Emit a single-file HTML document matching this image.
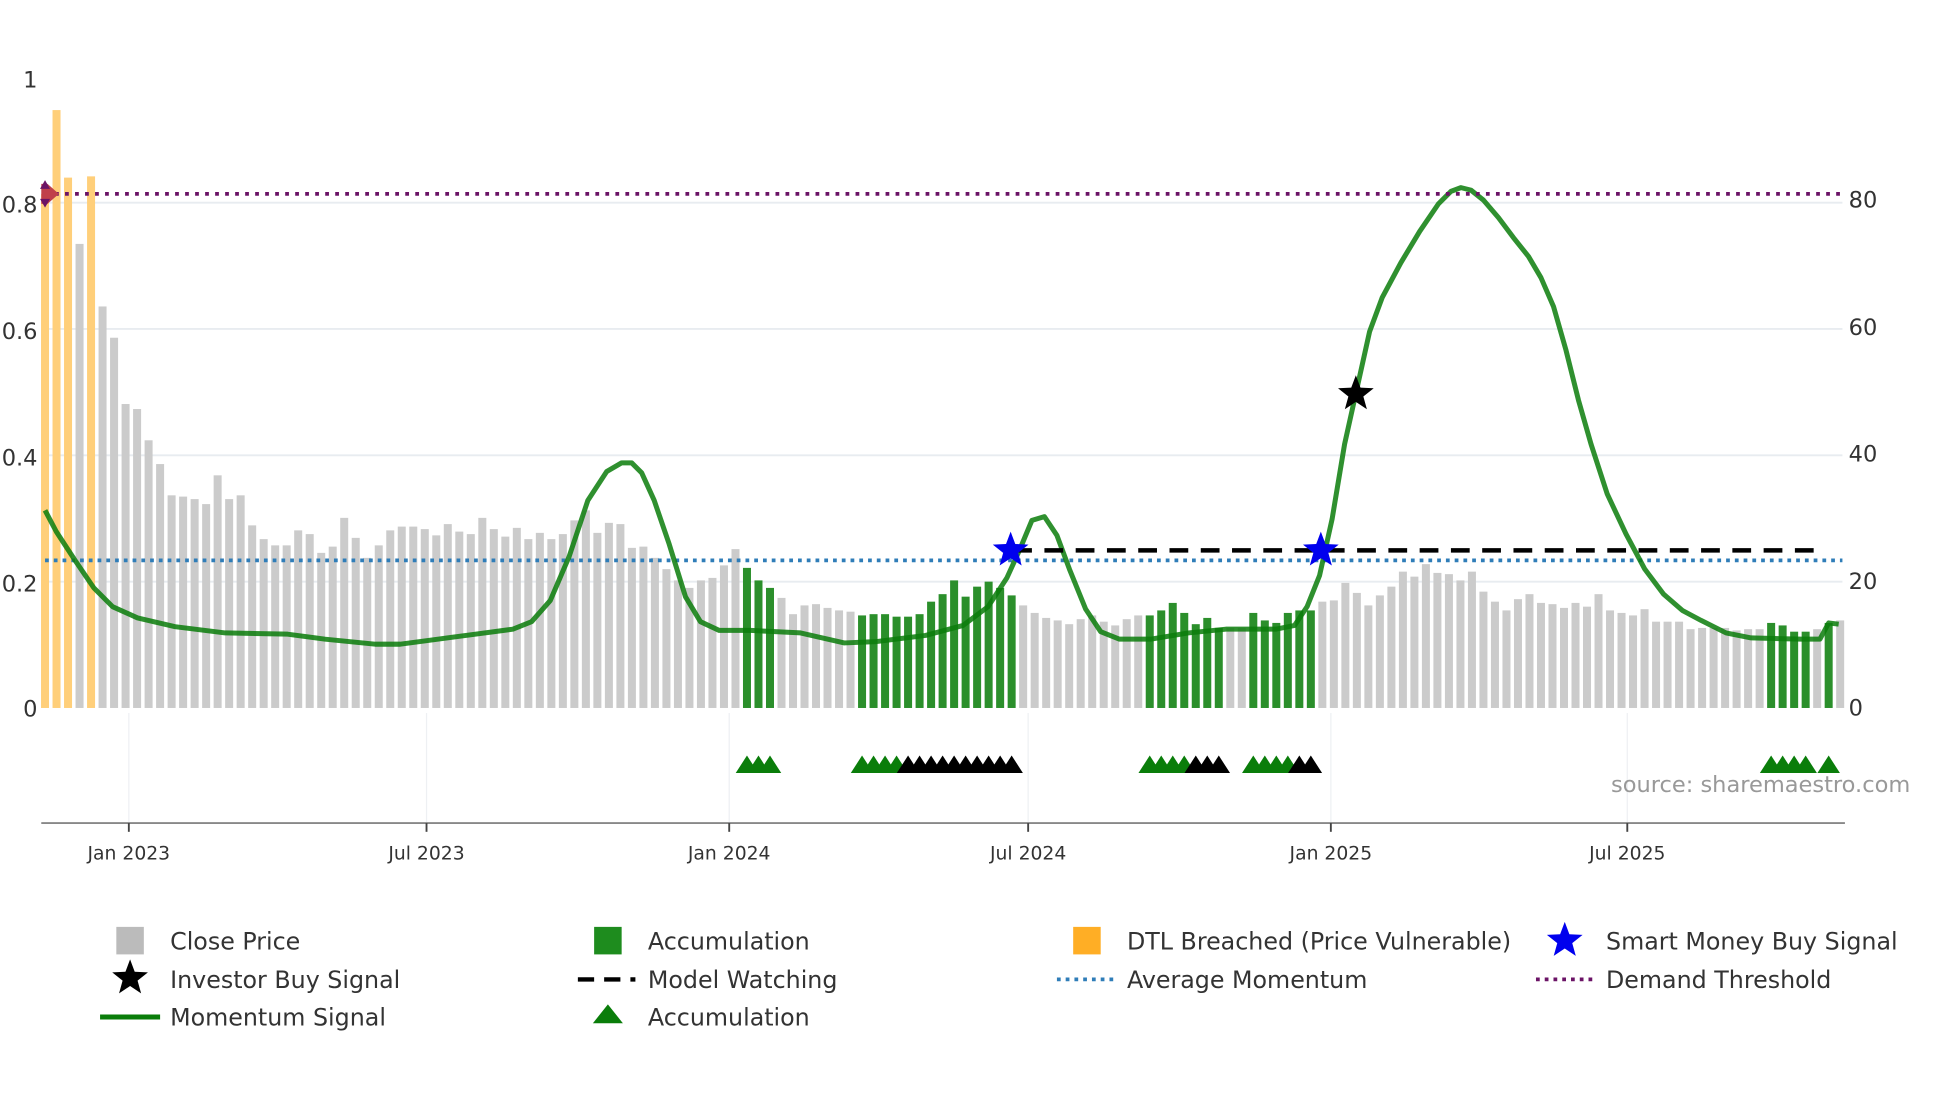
<!DOCTYPE html>
<html><head><meta charset="utf-8"><style>
html,body{margin:0;padding:0;background:#fff;width:1960px;height:1102px;overflow:hidden}
svg{display:block}
text{font-family:"DejaVu Sans","Liberation Sans",sans-serif;fill:#333}
</style></head><body>
<svg width="1960" height="1102" viewBox="0 0 1567 881" preserveAspectRatio="none" xmlns="http://www.w3.org/2000/svg">
<defs><path id="st" d="M0,-15 L3.7,-5.1 L14.27,-4.64 L5.99,1.95 L8.82,12.14 L0,6.3 L-8.82,12.14 L-5.99,1.95 L-14.27,-4.64 L-3.7,-5.1Z"/>
<path id="tr" d="M-9,618 L0,604 L9,618Z"/></defs>
<g stroke="#e8ecf0" stroke-width="1.5">
<line x1="33" y1="465" x2="1473" y2="465"/><line x1="33" y1="364" x2="1473" y2="364"/>
<line x1="33" y1="263" x2="1473" y2="263"/><line x1="33" y1="162" x2="1473" y2="162"/>
</g>
<g stroke="#eef0f3" stroke-width="1">
<line x1="103" y1="570" x2="103" y2="658"/><line x1="341" y1="570" x2="341" y2="658"/>
<line x1="583" y1="570" x2="583" y2="658"/><line x1="822" y1="570" x2="822" y2="658"/>
<line x1="1064" y1="570" x2="1064" y2="658"/><line x1="1301" y1="570" x2="1301" y2="658"/>
</g>
<g fill="#ffcf7a">
<rect x="32.8" y="155" width="6.4" height="411"/><rect x="42" y="88" width="6.4" height="478"/><rect x="51.2" y="142" width="6.4" height="424"/><rect x="69.6" y="141" width="6.4" height="425"/>
</g>
<g fill="#cbcbcb">
<rect x="60.4" y="195" width="6.4" height="371"/><rect x="78.8" y="245" width="6.4" height="321"/><rect x="88" y="270" width="6.4" height="296"/><rect x="97.2" y="323" width="6.4" height="243"/><rect x="106.4" y="327" width="6.4" height="239"/><rect x="115.6" y="352" width="6.4" height="214"/><rect x="124.8" y="371" width="6.4" height="195"/><rect x="134" y="396" width="6.4" height="170"/><rect x="143.2" y="397" width="6.4" height="169"/><rect x="152.4" y="399" width="6.4" height="167"/><rect x="161.6" y="403" width="6.4" height="163"/><rect x="170.8" y="380" width="6.4" height="186"/><rect x="180" y="399" width="6.4" height="167"/><rect x="189.2" y="396" width="6.4" height="170"/><rect x="198.4" y="420" width="6.4" height="146"/><rect x="207.6" y="431" width="6.4" height="135"/><rect x="216.8" y="436" width="6.4" height="130"/><rect x="226" y="436" width="6.4" height="130"/><rect x="235.2" y="424" width="6.4" height="142"/><rect x="244.4" y="427" width="6.4" height="139"/><rect x="253.6" y="442" width="6.4" height="124"/><rect x="262.8" y="437" width="6.4" height="129"/><rect x="272" y="414" width="6.4" height="152"/><rect x="281.2" y="430" width="6.4" height="136"/><rect x="290.4" y="446" width="6.4" height="120"/><rect x="299.6" y="436" width="6.4" height="130"/><rect x="308.8" y="424" width="6.4" height="142"/><rect x="318" y="421" width="6.4" height="145"/><rect x="327.2" y="421" width="6.4" height="145"/><rect x="336.4" y="423" width="6.4" height="143"/><rect x="345.6" y="428" width="6.4" height="138"/><rect x="354.8" y="419" width="6.4" height="147"/><rect x="364" y="425" width="6.4" height="141"/><rect x="373.2" y="427" width="6.4" height="139"/><rect x="382.4" y="414" width="6.4" height="152"/><rect x="391.6" y="423" width="6.4" height="143"/><rect x="400.8" y="429" width="6.4" height="137"/><rect x="410" y="422" width="6.4" height="144"/><rect x="419.2" y="431" width="6.4" height="135"/><rect x="428.4" y="426" width="6.4" height="140"/><rect x="437.6" y="431" width="6.4" height="135"/><rect x="446.8" y="427" width="6.4" height="139"/><rect x="456" y="416" width="6.4" height="150"/><rect x="465.2" y="408" width="6.4" height="158"/><rect x="474.4" y="426" width="6.4" height="140"/><rect x="483.6" y="418" width="6.4" height="148"/><rect x="492.8" y="419" width="6.4" height="147"/><rect x="502" y="438" width="6.4" height="128"/><rect x="511.2" y="437" width="6.4" height="129"/><rect x="520.4" y="446" width="6.4" height="120"/><rect x="529.6" y="455" width="6.4" height="111"/><rect x="538.8" y="464" width="6.4" height="102"/><rect x="548" y="470" width="6.4" height="96"/><rect x="557.2" y="464" width="6.4" height="102"/><rect x="566.4" y="462" width="6.4" height="104"/><rect x="575.6" y="452" width="6.4" height="114"/><rect x="584.8" y="439" width="6.4" height="127"/>
<rect x="621.6" y="478" width="6.4" height="88"/><rect x="630.8" y="491" width="6.4" height="75"/><rect x="640" y="484" width="6.4" height="82"/><rect x="649.2" y="483" width="6.4" height="83"/><rect x="658.4" y="486" width="6.4" height="80"/><rect x="667.6" y="488" width="6.4" height="78"/><rect x="676.8" y="489" width="6.4" height="77"/>
<rect x="814.8" y="484" width="6.4" height="82"/><rect x="824" y="490" width="6.4" height="76"/><rect x="833.2" y="494" width="6.4" height="72"/><rect x="842.4" y="496" width="6.4" height="70"/><rect x="851.6" y="499" width="6.4" height="67"/><rect x="860.8" y="495" width="6.4" height="71"/><rect x="870" y="492" width="6.4" height="74"/><rect x="879.2" y="497" width="6.4" height="69"/><rect x="888.4" y="500" width="6.4" height="66"/><rect x="897.6" y="495" width="6.4" height="71"/><rect x="906.8" y="492" width="6.4" height="74"/>
<rect x="980.4" y="502" width="6.4" height="64"/><rect x="989.6" y="502" width="6.4" height="64"/>
<rect x="1054" y="481" width="6.4" height="85"/><rect x="1063.2" y="480" width="6.4" height="86"/><rect x="1072.4" y="466" width="6.4" height="100"/><rect x="1081.6" y="474" width="6.4" height="92"/><rect x="1090.8" y="484" width="6.4" height="82"/><rect x="1100" y="476" width="6.4" height="90"/><rect x="1109.2" y="469" width="6.4" height="97"/><rect x="1118.4" y="457" width="6.4" height="109"/><rect x="1127.6" y="461" width="6.4" height="105"/><rect x="1136.8" y="451" width="6.4" height="115"/><rect x="1146" y="458" width="6.4" height="108"/><rect x="1155.2" y="459" width="6.4" height="107"/><rect x="1164.4" y="464" width="6.4" height="102"/><rect x="1173.6" y="457" width="6.4" height="109"/><rect x="1182.8" y="473" width="6.4" height="93"/><rect x="1192" y="481" width="6.4" height="85"/><rect x="1201.2" y="488" width="6.4" height="78"/><rect x="1210.4" y="479" width="6.4" height="87"/><rect x="1219.6" y="475" width="6.4" height="91"/><rect x="1228.8" y="482" width="6.4" height="84"/><rect x="1238" y="483" width="6.4" height="83"/><rect x="1247.2" y="486" width="6.4" height="80"/><rect x="1256.4" y="482" width="6.4" height="84"/><rect x="1265.6" y="485" width="6.4" height="81"/><rect x="1274.8" y="475" width="6.4" height="91"/><rect x="1284" y="488" width="6.4" height="78"/><rect x="1293.2" y="490" width="6.4" height="76"/><rect x="1302.4" y="492" width="6.4" height="74"/><rect x="1311.6" y="487" width="6.4" height="79"/><rect x="1320.8" y="497" width="6.4" height="69"/><rect x="1330" y="497" width="6.4" height="69"/><rect x="1339.2" y="497" width="6.4" height="69"/><rect x="1348.4" y="503" width="6.4" height="63"/><rect x="1357.6" y="502" width="6.4" height="64"/><rect x="1366.8" y="502" width="6.4" height="64"/><rect x="1376" y="502" width="6.4" height="64"/><rect x="1385.2" y="504" width="6.4" height="62"/><rect x="1394.4" y="503" width="6.4" height="63"/><rect x="1403.6" y="503" width="6.4" height="63"/>
<rect x="1449.6" y="503" width="6.4" height="63"/><rect x="1468" y="496" width="6.4" height="70"/>
</g>
<g fill="#2b8f2b">
<rect x="594" y="454" width="6.4" height="112"/><rect x="603.2" y="464" width="6.4" height="102"/><rect x="612.4" y="470" width="6.4" height="96"/>
<rect x="686" y="492" width="6.4" height="74"/><rect x="695.2" y="491" width="6.4" height="75"/><rect x="704.4" y="491" width="6.4" height="75"/><rect x="713.6" y="493" width="6.4" height="73"/><rect x="722.8" y="493" width="6.4" height="73"/><rect x="732" y="491" width="6.4" height="75"/><rect x="741.2" y="481" width="6.4" height="85"/><rect x="750.4" y="475" width="6.4" height="91"/><rect x="759.6" y="464" width="6.4" height="102"/><rect x="768.8" y="477" width="6.4" height="89"/><rect x="778" y="469" width="6.4" height="97"/><rect x="787.2" y="465" width="6.4" height="101"/><rect x="796.4" y="470" width="6.4" height="96"/><rect x="805.6" y="476" width="6.4" height="90"/>
<rect x="916" y="492" width="6.4" height="74"/><rect x="925.2" y="488" width="6.4" height="78"/><rect x="934.4" y="482" width="6.4" height="84"/><rect x="943.6" y="490" width="6.4" height="76"/><rect x="952.8" y="499" width="6.4" height="67"/><rect x="962" y="494" width="6.4" height="72"/><rect x="971.2" y="502" width="6.4" height="64"/>
<rect x="998.8" y="490" width="6.4" height="76"/><rect x="1008" y="496" width="6.4" height="70"/><rect x="1017.2" y="498" width="6.4" height="68"/><rect x="1026.4" y="490" width="6.4" height="76"/><rect x="1035.6" y="488" width="6.4" height="78"/><rect x="1044.8" y="488" width="6.4" height="78"/>
<rect x="1412.8" y="498" width="6.4" height="68"/><rect x="1422" y="500" width="6.4" height="66"/><rect x="1431.2" y="505" width="6.4" height="61"/><rect x="1440.4" y="505" width="6.4" height="61"/><rect x="1458.8" y="498" width="6.4" height="68"/>
</g>
<line x1="36" y1="448" x2="1473" y2="448" stroke="#2f7db8" stroke-width="3" stroke-dasharray="3,4"/>
<path fill="none" stroke="#0a7d0a" stroke-width="4" stroke-opacity="0.85" stroke-linejoin="round" d="M36,408 L45,425 L60,448 L75,470 L90,485 L110,494 L140,501 L180,506 L230,507 L260,511 L300,515 L320,515 L350,511 L380,507 L410,503 L425,497 L440,480 L455,445 L470,400 L485,377 L497,370 L505,370 L513,378 L523,400 L535,435 L548,477 L560,497 L575,504 L600,504 L640,506 L675,514 L700,513 L740,508 L770,500 L790,485 L805,462 L815,440 L825,416 L835,413 L845,428 L855,455 L868,487 L880,505 L895,511 L920,511 L950,506 L980,503 L1020,503 L1035,500 L1045,485 L1055,460 L1065,415 L1075,355 L1085,310 L1095,265 L1105,238 L1120,210 L1135,185 L1150,163 L1160,153 L1168,150 L1176,152 L1186,160 L1198,174 L1210,190 L1222,205 L1232,222 L1242,245 L1252,280 L1262,320 L1272,355 L1285,395 L1300,427 L1315,455 L1330,475 L1345,488 L1360,496 L1380,506 L1400,510 L1440,511 L1455,511 L1462,498 L1470,499"/>
<line x1="810" y1="440" x2="1460" y2="440" stroke="#000" stroke-width="3.5" stroke-dasharray="15,10"/>
<line x1="36" y1="155" x2="1473" y2="155" stroke="#6b1366" stroke-width="3" stroke-dasharray="3,5"/>
<path d="M33,147 L38,147 L47,155 L38,163 L33,163 Z" fill="#c0404a"/>
<path d="M36,144 L40,151 L32,151 Z M36,166 L40,159 L32,159 Z" fill="#6b1366"/>
<use href="#st" transform="translate(808,440)" fill="#0000ee"/>
<use href="#st" transform="translate(1056,440)" fill="#0000ee"/>
<use href="#st" transform="translate(1084,315)" fill="#000"/>
<use href="#st" transform="translate(104,782)" fill="#000"/>
<use href="#st" transform="translate(1251,752)" fill="#0000ee"/>
<g fill="#0a7d0a">
<use href="#tr" x="597.2"/><use href="#tr" x="606.4"/><use href="#tr" x="615.6"/>
<use href="#tr" x="689.2"/><use href="#tr" x="698.4"/><use href="#tr" x="707.6"/><use href="#tr" x="716.8"/>
<use href="#tr" x="919.2"/><use href="#tr" x="928.4"/><use href="#tr" x="937.6"/><use href="#tr" x="946.8"/>
<use href="#tr" x="1002"/><use href="#tr" x="1011.2"/><use href="#tr" x="1020.4"/><use href="#tr" x="1029.6"/>
<use href="#tr" x="1416"/><use href="#tr" x="1425.2"/><use href="#tr" x="1434.4"/><use href="#tr" x="1443.6"/><use href="#tr" x="1462"/>
</g>
<g fill="#000">
<use href="#tr" x="726"/><use href="#tr" x="735.2"/><use href="#tr" x="744.4"/><use href="#tr" x="753.6"/><use href="#tr" x="762.8"/><use href="#tr" x="772"/><use href="#tr" x="781.2"/><use href="#tr" x="790.4"/><use href="#tr" x="799.6"/><use href="#tr" x="808.8"/>
<use href="#tr" x="956"/><use href="#tr" x="965.2"/><use href="#tr" x="974.4"/>
<use href="#tr" x="1038.8"/><use href="#tr" x="1048"/>
</g>
<line x1="33" y1="658" x2="1475" y2="658" stroke="#888" stroke-width="1.5"/>
<g stroke="#444" stroke-width="1.5">
<line x1="103" y1="658" x2="103" y2="665"/><line x1="341" y1="658" x2="341" y2="665"/>
<line x1="583" y1="658" x2="583" y2="665"/><line x1="822" y1="658" x2="822" y2="665"/>
<line x1="1064" y1="658" x2="1064" y2="665"/><line x1="1301" y1="658" x2="1301" y2="665"/>
</g>
<g font-size="15" text-anchor="middle">
<text x="103" y="687">Jan 2023</text><text x="341" y="687">Jul 2023</text>
<text x="583" y="687">Jan 2024</text><text x="822" y="687">Jul 2024</text>
<text x="1064" y="687">Jan 2025</text><text x="1301" y="687">Jul 2025</text>
</g>
<g font-size="18" text-anchor="end">
<text x="30" y="70">1</text><text x="30" y="170">0.8</text><text x="30" y="271">0.6</text>
<text x="30" y="372">0.4</text><text x="30" y="473">0.2</text><text x="30" y="573">0</text>
</g>
<g font-size="18">
<text x="1478" y="166">80</text><text x="1478" y="268">60</text><text x="1478" y="369">40</text>
<text x="1478" y="471">20</text><text x="1478" y="572">0</text>
</g>
<text x="1288" y="633" font-size="18" style="fill:#999">source: sharemaestro.com</text>
<g font-size="19">
<rect x="93" y="741" width="22" height="22" fill="#bbb"/><text x="136" y="759">Close Price</text>
<text x="136" y="790">Investor Buy Signal</text>
<line x1="80" y1="813" x2="128" y2="813" stroke="#0a7d0a" stroke-width="4"/><text x="136" y="820">Momentum Signal</text>
<rect x="475" y="741" width="22" height="22" fill="#1e8c1e"/><text x="518" y="759">Accumulation</text>
<line x1="462" y1="783" x2="508" y2="783" stroke="#000" stroke-width="3.5" stroke-dasharray="13,8"/><text x="518" y="790">Model Watching</text>
<path d="M486,803 L498,818 L474,818 Z" fill="#0a7d0a"/><text x="518" y="820">Accumulation</text>
<rect x="858" y="741" width="22" height="22" fill="#ffae25"/><text x="901" y="759">DTL Breached (Price Vulnerable)</text>
<line x1="845" y1="783" x2="891" y2="783" stroke="#2f7db8" stroke-width="3" stroke-dasharray="3,4"/><text x="901" y="790">Average Momentum</text>
<text x="1284" y="759">Smart Money Buy Signal</text>
<line x1="1228" y1="783" x2="1274" y2="783" stroke="#6b1366" stroke-width="3" stroke-dasharray="3,4"/><text x="1284" y="790">Demand Threshold</text>
</g>
</svg>
</body></html>
